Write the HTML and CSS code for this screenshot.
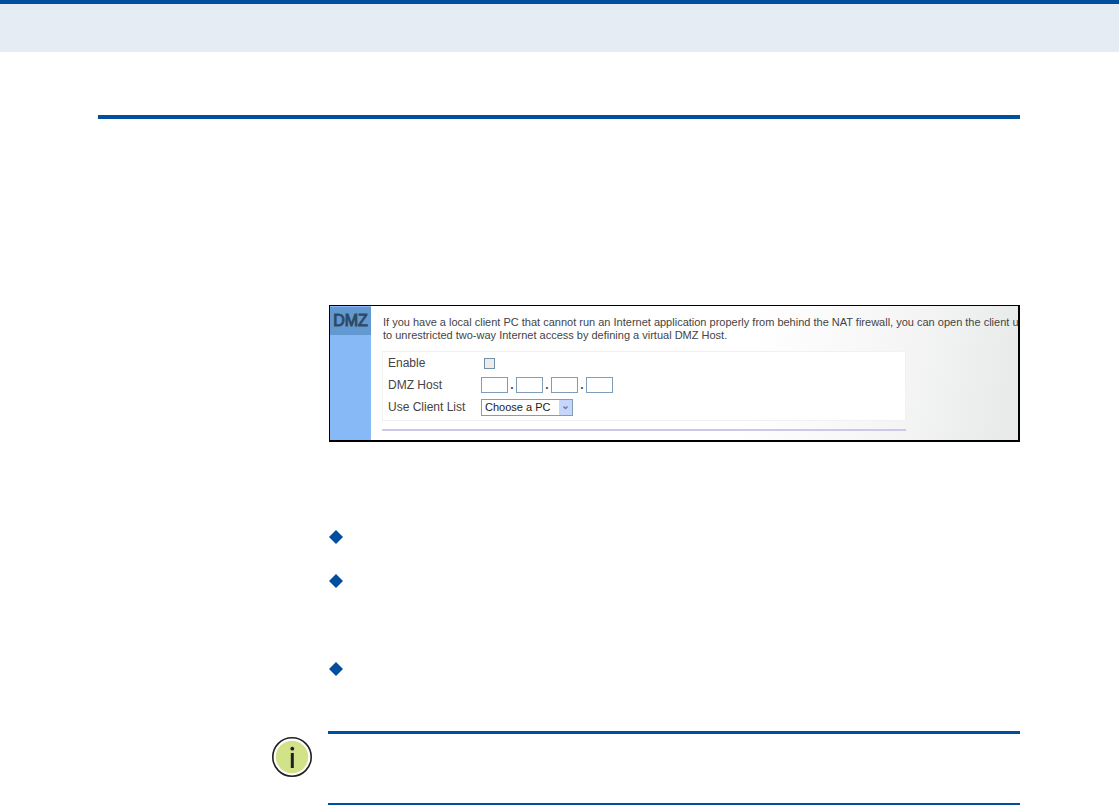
FILE: index.html
```html
<!DOCTYPE html>
<html lang="en">
<head>
<meta charset="utf-8">
<title>DMZ</title>
<meta name="viewport" content="width=device-width, initial-scale=1.0">
<link rel="stylesheet" href="styles.css">
</head>
<body>

<header class="page-header"></header>

<main class="page">
    <div class="content">
        <form class="dmz">
            <div class="sidebar">
                <h1>DMZ</h1>
            </div>
            <div class="settings">
                <p class="intro">If you have a local client PC that cannot run an Internet application properly from behind the NAT firewall, you can open the client u<br>to unrestricted two-way Internet access by defining a virtual DMZ Host.</p>

                <div class="fields">
                    <label for="enable">Enable</label>
                    <div class="control"><input type="checkbox" id="enable"></div>

                    <label for="ip1">DMZ Host</label>
                    <div class="control">
                        <input type="text" id="ip1" maxlength="3"><span class="dot">.</span>
                        <input type="text" id="ip2" maxlength="3" aria-label="DMZ Host, second part"><span class="dot">.</span>
                        <input type="text" id="ip3" maxlength="3" aria-label="DMZ Host, third part"><span class="dot">.</span>
                        <input type="text" id="ip4" maxlength="3" aria-label="DMZ Host, fourth part">
                    </div>

                    <label for="client">Use Client List</label>
                    <div class="control">
                        <div class="select">
                            <select id="client">
                                <option>Choose a PC</option>
                            </select>
                            <svg class="arrow" viewBox="0 0 13 15" aria-hidden="true">
                                <rect width="13" height="15" rx="1" fill="#c6d6fb"/>
                                <path d="M4.500 6.500l2 2 2-2" fill="none" stroke="#6b7c9c" stroke-width="1.500"/>
                            </svg>
                        </div>
                    </div>
                </div>
                <hr>
            </div>
        </form>

        <ul class="bullets">
            <li></li>
            <li class="tall"></li>
            <li></li>
        </ul>
    </div>

    <aside class="note">
        <svg class="info" viewBox="0 0 40 40" aria-hidden="true">
            <circle cx="20" cy="20" r="19.200" fill="#fff" stroke="#231f20" stroke-width="1.600"/>
            <circle cx="20" cy="20" r="16.200" fill="#d1e288"/>
            <circle cx="20.300" cy="11.700" r="1.900" fill="#231f20"/>
            <rect x="18.800" y="16" width="3" height="15" fill="#231f20"/>
        </svg>
        <div class="note-text"></div>
    </aside>
</main>

</body>
</html>
```

FILE: styles.css
```css
body {
    margin: 0;
    background-color: #fff;
    color: #444;
    font-family: "Liberation Sans", Arial, sans-serif;
    font-size: 11px;
}
.page-header {
    height: 48px;
    border-top: 4px solid #004f9f;
    background-color: #e5ecf4;
}
.page {
    margin: 63px 99px 0 98px;
    border-top: 4px solid #004f9f;
}
.content {
    margin-left: 231px;
    padding-top: 186px;
}
.dmz {
    display: flex;
    border: solid #000;
    border-width: 1px 2px 2px 1px;
    background: linear-gradient(100deg, #fff 60%, #f5f5f5 82%, #e9ebeb 97%);
}
.sidebar {
    flex: none;
    width: 41px;
    background-color: #86b9f6;
}
.sidebar h1 {
    margin: 1px 0 0;
    background-color: #6299d1;
    color: #2f4a63;
    font-size: 16px;
    font-weight: normal;
    line-height: 28px;
    text-align: center;
    -webkit-text-stroke: 1px #2f4a63;
}
.settings {
    flex: 1;
    min-width: 0;
    padding: 10px 0 9px 11px;
}
.intro {
    margin: 0 0 9px 1px;
    line-height: 13px;
    white-space: nowrap;
}
.fields {
    display: grid;
    grid-template-columns: 93px 1fr;
    grid-auto-rows: 22px;
    align-items: center;
    max-width: 517px;
    padding: 0 0 2px 5px;
    border: 1px solid #f1f1f1;
    background-color: #fff;
    font-size: 12px;
}
.control {
    display: flex;
    align-items: center;
}
input[type="checkbox"] {
    appearance: none;
    width: 11px;
    height: 11px;
    margin: 0 0 0 3px;
    border: 1px solid #7590ab;
    background-color: #ececea;
}
input[type="checkbox"]:checked {
    background-color: #6299d1;
}
input[type="text"] {
    box-sizing: border-box;
    width: 27px;
    height: 16px;
    padding: 0 2px;
    border: 1px solid #7f9db9;
    background-color: #fff;
    font: inherit;
}
.dot {
    width: 8px;
    font-weight: bold;
    text-align: center;
}
.select {
    position: relative;
}
select {
    appearance: none;
    display: block;
    width: 92px;
    height: 17px;
    padding: 0 0 0 3px;
    border: 1px solid #7f9db9;
    border-radius: 0;
    background-color: #fff;
    color: #222;
    font: inherit;
    font-size: 11px;
}
.arrow {
    position: absolute;
    top: 1px;
    right: 1px;
    width: 13px;
    height: 15px;
    pointer-events: none;
}
hr {
    max-width: 524px;
    height: 2px;
    margin: 8px 0 0;
    border: 0;
    background-color: #cbc8ea;
}
.bullets {
    margin: 88px 0 0;
    padding: 0;
    list-style: none;
}
.bullets li {
    height: 44px;
}
.bullets .tall {
    height: 88px;
}
.bullets li::before {
    content: "";
    display: block;
    width: 14px;
    height: 14px;
    background-color: #004f9f;
    clip-path: polygon(50% 0, 100% 50%, 50% 100%, 0 50%);
}
.note {
    display: flex;
    gap: 16px;
    margin: 25px 0 0 174px;
}
.info {
    flex: none;
    width: 40px;
    height: 40px;
    margin-top: 6px;
}
.note-text {
    flex: 1;
    min-height: 69px;
    border-top: 3px solid #004f9f;
    border-bottom: 2px solid #004f9f;
}
```
